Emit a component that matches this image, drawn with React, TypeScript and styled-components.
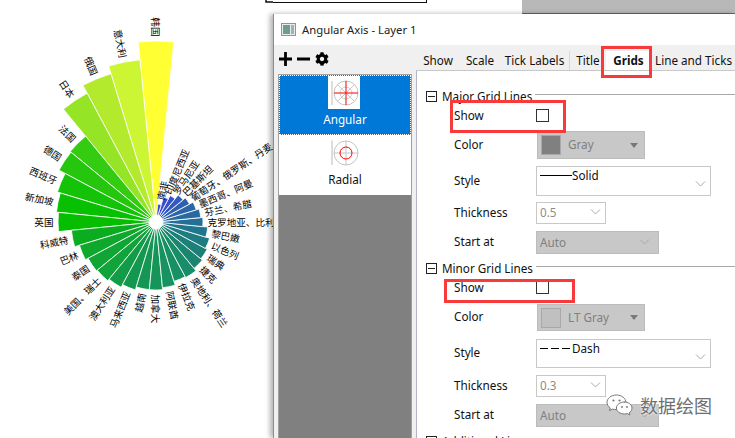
import styled, { createGlobalStyle } from 'styled-components';
import { FaCog } from 'react-icons/fa';

const CX = 156;
const CY = 222;
const HOLE = 7;
const STEP = 11.25;

// counter-clockwise from the top
const bars = [
  ['韩国', 181, '#ffff33'],
  ['意大利', 163, '#ccf533'],
  ['俄国', 155, '#b4ea2e'],
  ['日本', 146, '#96e426'],
  ['法国', 111, '#34cc11'],
  ['德国', 110, '#26c60e'],
  ['西班牙', 103, '#14c208'],
  ['新加坡', 100, '#08c002'],
  ['英国', 98, '#06bd00'],
  ['科威特', 85, '#0bad20'],
  ['巴林', 80, '#0ea82c'],
  ['泰国', 77, '#10a535'],
  ['美国、瑞士', 76, '#11a43a'],
  ['澳大利亚', 74, '#139c48'],
  ['马来西亚', 71, '#14984f'],
  ['越南', 68, '#159654'],
  ['加拿大', 68, '#169558'],
  ['阿联酋', 66, '#169360'],
  ['伊拉克', 62, '#179064'],
  ['奥地利、荷兰', 63, '#198c68'],
  ['捷克', 60, '#1b8570'],
  ['瑞典', 58, '#1c8078'],
  ['以色列', 56, '#1e7c80'],
  ['黎巴嫩', 52, '#21758c'],
  ['克罗地亚、比利时', 47, '#246f98'],
  ['芬兰、希腊', 45, '#286aa0'],
  ['墨西哥、阿曼', 42, '#2c65a8'],
  ['葡萄牙、俄罗斯、丹麦', 38, '#2f60b0'],
  ['巴基斯坦', 35, '#3259bc'],
  ['罗马尼亚', 30, '#3553c8'],
  ['印度尼西亚', 26, '#384dd4'],
  ['南非', 18, '#3b48e0'],
] as const;

const polar = (r: number, deg: number) => {
  const a = (deg * Math.PI) / 180;
  return [CX + r * Math.sin(a), CY - r * Math.cos(a)];
};

const wedge = (r: number, deg: number) => {
  const [x1, y1] = polar(HOLE, deg - STEP / 2);
  const [x2, y2] = polar(r, deg - STEP / 2);
  const [x3, y3] = polar(r, deg + STEP / 2);
  const [x4, y4] = polar(HOLE, deg + STEP / 2);
  return `M${x1} ${y1}L${x2} ${y2}A${r} ${r} 0 0 1 ${x3} ${y3}L${x4} ${y4}Z`;
};

function PolarChart() {
  return (
    <ChartSvg viewBox="0 0 273 438" width="273" height="438">
      <path d="M266 0V2H273" fill="none" stroke="#111" strokeWidth="1.5" />
      {bars.map(([name, r, color], i) => (
        <path key={name} d={wedge(r, -i * STEP)} fill={color} stroke="#fff" strokeWidth="0.8" />
      ))}
      {bars.map(([name, r], i) => {
        const deg = (360 - i * STEP) % 360;
        const [x, y] = polar(r + 4.5, deg);
        const right = deg > 0 && deg <= 180;
        const rotate = right ? deg - 90 : deg + 90;
        return (
          <BarLabel
            key={name}
            x={x}
            y={y}
            textAnchor={right ? 'start' : 'end'}
            dominantBaseline="central"
            transform={`rotate(${rotate} ${x} ${y})`}
          >
            {name}
          </BarLabel>
        );
      })}
    </ChartSvg>
  );
}

function WindowIcon() {
  return (
    <svg width="15" height="13" viewBox="0 0 15 13">
      <rect x="0.5" y="0.5" width="14" height="12" fill="#e8ecec" stroke="#8d9595" />
      <rect x="2" y="2" width="7" height="9" fill="#6f9c8e" />
      <rect x="10" y="2" width="3" height="9" fill="#9db2bb" />
    </svg>
  );
}

function AngularIcon() {
  return (
    <NodeIcon width="32" height="33" viewBox="0 0 32 33">
      <rect width="32" height="33" fill="#fff" />
      <line x1="4" y1="5" x2="4" y2="29" stroke="#bbb" />
      <circle cx="18" cy="17" r="12" fill="none" stroke="#c4c4c4" />
      <circle cx="18" cy="17" r="6" fill="none" stroke="#d0d0d0" />
      <path d="M10 9L26 25M26 9L10 25" stroke="#c8c8c8" />
      <path d="M6 17H30M18 5V29" stroke="#f00" />
    </NodeIcon>
  );
}

function RadialIcon() {
  return (
    <NodeIcon width="32" height="26" viewBox="0 0 32 26">
      <line x1="4" y1="0.5" x2="4" y2="25" stroke="#bbb" />
      <circle cx="18" cy="13" r="12" fill="none" stroke="#c4c4c4" />
      <path d="M6 13H30M18 1V25" stroke="#c4c4c4" />
      <circle cx="18" cy="13" r="6" fill="none" stroke="#f00" />
    </NodeIcon>
  );
}

function Chevron() {
  return (
    <svg width="11" height="6" viewBox="0 0 11 6">
      <path d="M1 0.5L5.5 5L10 0.5" fill="none" stroke="#a8a8a8" />
    </svg>
  );
}

function WeChatMark() {
  return (
    <svg width="28" height="24" viewBox="0 0 28 22">
      <path
        d="M10.5 1C5 1 1 4.4 1 8.4c0 2.3 1.3 4.2 3.3 5.6L3.4 16.6l3-1.5c1.2.3 2.6.5 4 .5 5.2 0 9.5-3.2 9.5-7.2S15.7 1 10.5 1z"
        fill="#fff"
        stroke="#777"
      />
      <path
        d="M18.5 8C14 8 10.4 10.7 10.4 14s3.6 6 8.1 6c1 0 2-.1 2.9-.4l2.5 1.4-.7-2.2c1.7-1.1 2.8-2.9 2.8-4.8 0-3.3-3.6-6-8-6z"
        fill="#fff"
        stroke="#777"
      />
      <circle cx="7.5" cy="6.5" r="1.1" fill="#777" />
      <circle cx="13.5" cy="6.5" r="1.1" fill="#777" />
      <circle cx="16" cy="13" r="0.9" fill="#777" />
      <circle cx="21" cy="13" r="0.9" fill="#777" />
    </svg>
  );
}

function Group({ title }: { title: string }) {
  return (
    <GroupHeader>
      <Collapse />
      <GroupTitle>{title}</GroupTitle>
      <GroupLine />
    </GroupHeader>
  );
}

function GridOptions({
  gray,
  colorName,
  lineName,
  dashed,
  thickness,
  tight,
}: {
  gray: string;
  colorName: string;
  lineName: string;
  dashed?: boolean;
  thickness: string;
  tight?: boolean;
}) {
  return (
    <>
      <Row $h={tight ? 21 : 22} $mt={tight ? 1 : 0}>
        <Label>Show</Label>
        <CheckBox />
      </Row>
      <Row $h={tight ? 27 : 28} $mt={tight ? 5 : 4}>
        <Label>Color</Label>
        <ColorCombo>
          <Swatch $color={gray} />
          <ColorName>{colorName}</ColorName>
          <Caret />
        </ColorCombo>
      </Row>
      <Row $h={tight ? 29 : 30} $mt={tight ? 8 : 7}>
        <Label>Style</Label>
        <StyleCombo>
          <LineSample $dashed={dashed} />
          <StyleName>{lineName}</StyleName>
          <StyleChevron>
            <Chevron />
          </StyleChevron>
        </StyleCombo>
      </Row>
      <Row $h={22} $mt={tight ? 7 : 6}>
        <Label>Thickness</Label>
        <ThicknessCombo>
          {thickness}
          <Chevron />
        </ThicknessCombo>
      </Row>
      <Row $h={23} $mt={7}>
        <Label>Start at</Label>
        <AutoCombo>
          Auto
          <Chevron />
        </AutoCombo>
      </Row>
    </>
  );
}

export default function App() {
  return (
    <>
      <GlobalStyle />
      <Page>
        <ChartArea>
          <PolarChart />
        </ChartArea>
        <RightSide>
          <BehindStrip>
            <BehindBox />
            <BehindGap />
            <BehindBar />
          </BehindStrip>
          <Dialog>
            <TitleBar>
              <WindowIcon />
              <TitleText>Angular Axis - Layer 1</TitleText>
            </TitleBar>
            <DialogBody>
              <Sidebar>
                <ToolRow>
                  <svg width="13" height="14" viewBox="0 0 14 14" preserveAspectRatio="none">
                    <path d="M5.5 0h3v5.5H14v3H8.5V14h-3V8.5H0v-3h5.5z" fill="#000" />
                  </svg>
                  <svg width="13" height="14" viewBox="0 0 14 14" preserveAspectRatio="none">
                    <rect y="5.5" width="14" height="3" fill="#000" />
                  </svg>
                  <FaCog size={14} color="#000" />
                </ToolRow>
                <NodeList>
                  <Node $active>
                    <AngularIcon />
                    <NodeName>Angular</NodeName>
                  </Node>
                  <Node>
                    <RadialIcon />
                    <NodeName>Radial</NodeName>
                  </Node>
                </NodeList>
              </Sidebar>
              <Main>
                <Tabs>
                  <Tab $w={44}>Show</Tab>
                  <Tab $w={40}>Scale</Tab>
                  <Tab $w={70} $divider>
                    Tick Labels
                  </Tab>
                  <Tab $w={36}>Title</Tab>
                  <Tab $w={45} $active>
                    Grids
                  </Tab>
                  <Tab $w={85}>Line and Ticks</Tab>
                </Tabs>
                <Panel>
                  <Group title="Major Grid Lines" />
                  <GridOptions gray="#808080" colorName="Gray" lineName="Solid" thickness="0.5" />
                  <GroupGap />
                  <Group title="Minor Grid Lines" />
                  <GridOptions
                    tight
                    gray="#c0c0c0"
                    colorName="LT Gray"
                    lineName="Dash"
                    dashed
                    thickness="0.3"
                  />
                  <GroupGap />
                  <Group title="Additional Lines" />
                </Panel>
              </Main>
            </DialogBody>
            <Highlight $x={327} $y={32} $w={51} $h={32} />
            <Highlight $x={176} $y={86} $w={116} $h={33} />
            <Highlight $x={170} $y={265} $w={131} $h={24} />
            <Watermark>
              <WeChatMark />
              <WatermarkText>数据绘图</WatermarkText>
            </Watermark>
          </Dialog>
        </RightSide>
      </Page>
    </>
  );
}

const UI_FONT = `"Noto Sans", "Open Sans", sans-serif`;

const GlobalStyle = createGlobalStyle`
  html, body {
    margin: 0;
    background: #fff;
  }
`;

const Page = styled.div`
  display: flex;
  width: 735px;
  height: 438px;
  overflow: hidden;
  background: #fff;
  font-family: ${UI_FONT};
  font-size: 11.7px;
  color: #111;
`;

const ChartArea = styled.div`
  flex: 0 0 273px;
  height: 438px;
`;

const ChartSvg = styled.svg`
  display: block;
`;

const BarLabel = styled.text`
  font-family: "Noto Sans CJK SC", sans-serif;
  font-size: 9.6px;
  fill: #000;
`;

const RightSide = styled.div`
  flex: 1;
  display: flex;
  flex-direction: column;
  min-width: 0;
`;

const BehindStrip = styled.div`
  display: flex;
  flex: 0 0 14px;
`;

const BehindBox = styled.div`
  width: 153px;
  height: 2px;
  border-right: 1px solid #111;
  border-bottom: 1px solid #111;
`;

const BehindGap = styled.div`
  width: 95px;
`;

const BehindBar = styled.div`
  flex: 1;
  background: #b8b8b8;
  border-bottom: 1px solid #666;
`;

const Dialog = styled.div`
  position: relative;
  z-index: 1;
  flex: 1;
  display: flex;
  flex-direction: column;
  min-height: 0;
  overflow: hidden;
  background: #f0f0f0;
  border-left: 1px solid #8c8c8c;
  box-shadow: -3px 0 5px rgba(0, 0, 0, 0.3);
`;

const TitleBar = styled.div`
  flex: 0 0 31px;
  display: flex;
  align-items: center;
  gap: 6px;
  padding-left: 7px;
  background: #fff;
`;

const TitleText = styled.span`
  font-size: 11.3px;
  color: #222;
`;

const DialogBody = styled.div`
  flex: 1;
  display: flex;
  min-height: 0;
`;

const Sidebar = styled.div`
  flex: 0 0 142px;
  display: flex;
  flex-direction: column;
  padding: 5px 4px 0 4px;
  box-sizing: border-box;
`;

const ToolRow = styled.div`
  flex: 0 0 22px;
  display: flex;
  align-items: flex-start;
  gap: 5px;
  padding: 2px 0 0 1px;
`;

const NodeList = styled.div`
  flex: 1;
  background: #808080;
  border: 1px solid #a0a0a0;
  border-bottom: 0;
  width: 134px;
  box-sizing: border-box;
`;

const Node = styled.div<{ $active?: boolean }>`
  height: 60px;
  box-sizing: border-box;
  display: flex;
  flex-direction: column;
  align-items: center;
  gap: ${({ $active }) => ($active ? '3px' : '6px')};
  padding-top: ${({ $active }) => ($active ? '0' : '5px')};
  background: ${({ $active }) => ($active ? '#0078d7' : '#fff')};
  color: ${({ $active }) => ($active ? '#fff' : '#111')};
  border: ${({ $active }) => ($active ? '1px dotted #fff' : '0')};
`;

const NodeIcon = styled.svg`
  display: block;
  margin-right: 2px;
`;

const NodeName = styled.span`
  font-size: 11.7px;
  line-height: 14px;
`;

const Main = styled.div`
  flex: 1;
  display: flex;
  flex-direction: column;
  min-width: 0;
  padding-top: 6px;
`;

const Tabs = styled.div`
  flex: 0 0 19px;
  display: flex;
  border-bottom: 1px solid #c8c8c8;
`;

const Tab = styled.div<{ $w: number; $active?: boolean; $divider?: boolean }>`
  flex: 0 0 ${({ $w }) => $w}px;
  display: flex;
  align-items: center;
  justify-content: center;
  white-space: nowrap;
  box-sizing: border-box;
  padding-bottom: 2px;
  font-weight: ${({ $active }) => ($active ? 700 : 400)};
  background: ${({ $active }) => ($active ? '#fff' : 'transparent')};
  border-right: ${({ $divider }) => ($divider ? '1px solid #d8d8d8' : '0')};
`;

const Panel = styled.div`
  flex: 1;
  min-height: 0;
  overflow: hidden;
  background: #fff;
  border-left: 1px solid #b4b4c8;
  padding: 16px 0 0 9px;
`;

const GroupHeader = styled.div`
  height: 18px;
  display: flex;
  align-items: center;
`;

const Collapse = styled.div`
  position: relative;
  width: 9px;
  height: 9px;
  border: 1px solid #222;
  margin-right: 5px;

  &::after {
    content: '';
    position: absolute;
    left: 1px;
    right: 1px;
    top: 4px;
    height: 1px;
    background: #222;
  }
`;

const GroupTitle = styled.span`
  white-space: nowrap;
  margin-top: -1px;
`;

const GroupLine = styled.div`
  flex: 1;
  height: 1px;
  margin: -4px 0 0 3px;
  background: #a8a8a8;
`;

const GroupGap = styled.div`
  height: 5px;
`;

const Row = styled.div<{ $h: number; $mt: number }>`
  height: ${({ $h }) => $h}px;
  margin-top: ${({ $mt }) => $mt}px;
  display: flex;
  align-items: center;
  padding-left: 28px;
`;

const Label = styled.span`
  flex: 0 0 82px;
  margin-top: -3px;
`;

const CheckBox = styled.div`
  width: 11px;
  height: 11px;
  margin-top: -2px;
  border: 1px solid #333;
  background: #fff;
`;

const ColorCombo = styled.div`
  width: 108px;
  height: 100%;
  margin-left: 1px;
  box-sizing: border-box;
  display: flex;
  align-items: center;
  padding: 0 6px 0 3px;
  background: #c8c8c8;
  border: 1px solid #bcbcbc;
`;

const Swatch = styled.div<{ $color: string }>`
  width: 18px;
  height: 18px;
  background: ${({ $color }) => $color};
  border: 1px solid #a8a8a8;
`;

const ColorName = styled.span`
  flex: 1;
  margin: -2px 0 0 7px;
  color: #808080;
`;

const Caret = styled.div`
  width: 0;
  height: 0;
  border-left: 4.5px solid transparent;
  border-right: 4.5px solid transparent;
  border-top: 5px solid #787878;
`;

const StyleCombo = styled.div`
  position: relative;
  width: 175px;
  height: 100%;
  box-sizing: border-box;
  display: flex;
  align-items: flex-start;
  padding: 0 0 0 3px;
  line-height: 17px;
  border: 1px solid #c8c8c8;
  background: #fff;
`;

const LineSample = styled.div<{ $dashed?: boolean }>`
  width: 32px;
  height: 1px;
  margin-top: 8px;
  background: ${({ $dashed }) =>
    $dashed ? 'repeating-linear-gradient(90deg, #000 0 8px, transparent 8px 11px)' : '#000'};
`;

const StyleName = styled.span``;

const StyleChevron = styled.div`
  position: absolute;
  right: 4px;
  top: 14px;
  line-height: 0;
`;

const ThicknessCombo = styled.div`
  width: 70px;
  height: 100%;
  box-sizing: border-box;
  display: flex;
  align-items: center;
  justify-content: space-between;
  padding: 0 4px 2px 3px;
  color: #8c8c8c;
  border: 1px solid #c8c8c8;
`;

const AutoCombo = styled(ThicknessCombo)`
  width: 123px;
  padding: 0 8px 2px 3px;
  background: #c8c8c8;
  border-color: #bcbcbc;
  color: #808080;
`;

const Highlight = styled.div<{ $x: number; $y: number; $w: number; $h: number }>`
  position: absolute;
  left: ${({ $x }) => $x}px;
  top: ${({ $y }) => $y}px;
  width: ${({ $w }) => $w}px;
  height: ${({ $h }) => $h}px;
  box-sizing: border-box;
  border: 3px solid #f93a3a;
  pointer-events: none;
`;

const Watermark = styled.div`
  position: absolute;
  left: 332px;
  top: 378px;
  display: flex;
  align-items: center;
  gap: 6px;
`;

const WatermarkText = styled.span`
  font-family: "Noto Sans CJK SC", sans-serif;
  font-size: 18px;
  color: #707070;
  text-shadow: 0 0 2px #fff, 0 0 2px #fff;
`;
